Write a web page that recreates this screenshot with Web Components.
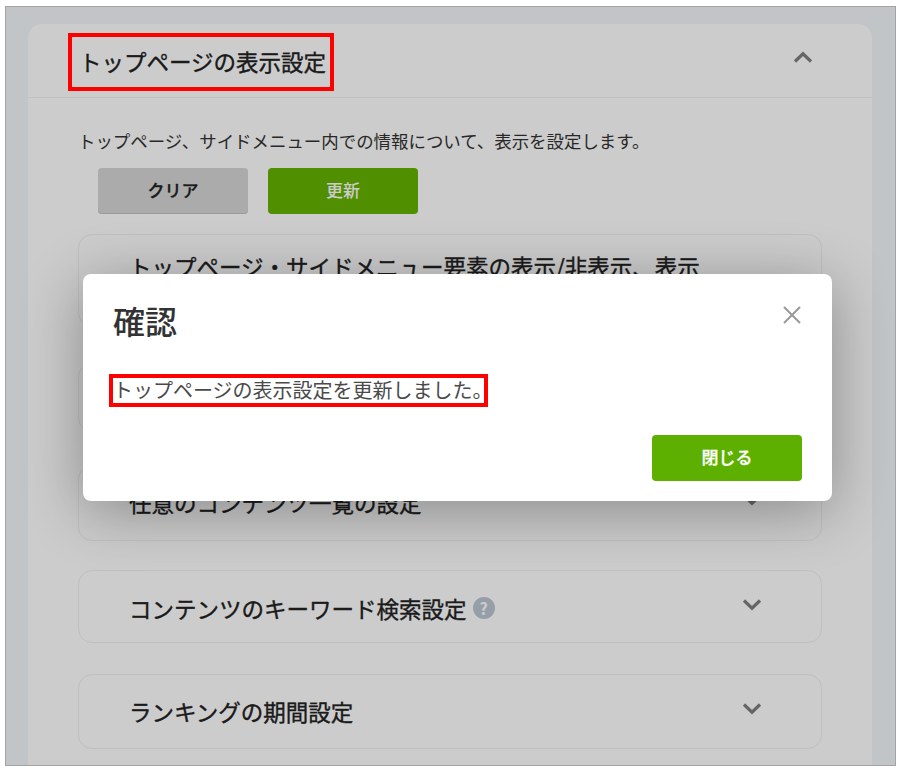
<!DOCTYPE html>
<html lang="ja">
<head>
<meta charset="utf-8">
<title>トップページの表示設定</title>
<style>
html, body { margin: 0; padding: 0; background: #fff; }
body { font-family: "Noto Sans CJK JP", "Noto Sans", sans-serif; color: #222; overflow: hidden; }
</style>
</head>
<body>
<shot-frame>
  <settings-card heading="トップページの表示設定">
    <span slot="desc">トップページ、サイドメニュー内での情報について、表示を設定します。</span>
    <app-button kind="gray">クリア</app-button>
    <app-button kind="green">更新</app-button>
    <set-panel slot="panels" h="93" gap="0" pad="16" chev="36">トップページ・サイドメニュー要素の表示/非表示、表示</set-panel>
    <set-panel slot="panels" h="69" gap="36"></set-panel>
    <set-panel slot="panels" h="76" gap="33" pad="21" chev="7">任意のコンテンツ一覧の設定</set-panel>
    <set-panel slot="panels" h="73" gap="29" help>コンテンツのキーワード検索設定</set-panel>
    <set-panel slot="panels" h="75" gap="31" pad="21" chev="7">ランキングの期間設定</set-panel>
  </settings-card>
  <red-mark slot="overlay"></red-mark>
  <confirm-dialog slot="overlay" heading="確認">
    トップページの表示設定を更新しました。
    <app-button slot="actions" kind="bright">閉じる</app-button>
  </confirm-dialog>
</shot-frame>

<script>
// screenshot frame + dimmed overlay
class ShotFrame extends HTMLElement{
    constructor(){
        super();
        this.attachShadow({mode:"open"}).innerHTML = `
<style>
:host{
    display: block;
    position: relative;
    box-sizing: border-box;
    width: 891px;
    height: 760px;
    margin: 6px 0 0 5px;
    border: 1px solid #a3a3a3;
    background: #f2f7fb;
    padding: 17px 23px 0 22px;
    overflow: hidden;
}
.overlay{
    position: absolute;
    inset: 0;
    background: rgba(0,0,0,0.2);
    padding: 267px 0 0 77px;
}
</style>
<slot></slot>
<div class="overlay"><slot name="overlay"></slot></div>`;
    }
}
customElements.define('shot-frame', ShotFrame);

// red annotation box drawn over the dimmed page
class RedMark extends HTMLElement{
    constructor(){
        super();
        this.attachShadow({mode:"open"}).innerHTML = `
<style>
:host{
    display: block;
    position: absolute;
    box-sizing: border-box;
    left: 62px;
    top: 26px;
    width: 266px;
    height: 58px;
    border: 4px solid #ff0000;
}
</style>`;
    }
}
customElements.define('red-mark', RedMark);

class SettingsCard extends HTMLElement{
    constructor(){
        super();
        this.attachShadow({mode:"open"}).innerHTML = `
<style>
:host{
    display: block;
    width: 844px;
    height: 900px;
    background: #fff;
    border-radius: 14px 14px 0 0;
}
.head{
    box-sizing: border-box;
    height: 74px;
    padding: 9px 59px 0 51px;
    border-bottom: 1px solid #f0f0f0;
    display: flex;
    justify-content: space-between;
}
h2{
    margin: 0;
    font-size: 22.5px;
    font-weight: 400;
    line-height: 56px;
    color: #222;
    -webkit-text-stroke: 0.35px #222;
}
svg{ margin: 18px 0 0 0; }
.desc{
    margin: 32px 0 0 50px;
    font-size: 17.45px;
    line-height: 22px;
    color: #333;
}
.btns{
    display: flex;
    gap: 20px;
    margin: 16px 0 0 70px;
}
.panels{
    margin: 20px 50px 0 50px;
}
</style>
<div class="head">
    <h2></h2>
    <svg width="20" height="12" viewBox="0 0 20 12"><path d="M2 10.5 L10 2.8 L18 10.5" fill="none" stroke="#808080" stroke-width="3.2"/></svg>
</div>
<div class="desc"><slot name="desc"></slot></div>
<div class="btns"><slot></slot></div>
<div class="panels"><slot name="panels"></slot></div>`;
        this.shadowRoot.querySelector("h2").textContent = this.getAttribute("heading");
    }
}
customElements.define('settings-card', SettingsCard);

class AppButton extends HTMLElement{
    constructor(){
        super();
        this.attachShadow({mode:"open"}).innerHTML = `
<style>
:host{
    display: flex;
    box-sizing: border-box;
    width: 150px;
    height: 46px;
    padding-bottom: 4px;
    align-items: center;
    justify-content: center;
    border-radius: 4px;
    font-size: 17px;
    font-weight: 500;
}
:host([kind="gray"]){ background: #d6d6d6; color: #222; box-shadow: inset 0 -1px 0 #c4c4c4; -webkit-text-stroke: 0.3px #222; }
:host([kind="green"]){ background: #63b300; color: #fff; }
:host([kind="bright"]){ background: #5eb000; color: #fff; -webkit-text-stroke: 0.3px #fff; }
</style>
<slot></slot>`;
    }
}
customElements.define('app-button', AppButton);

class SetPanel extends HTMLElement{
    constructor(){
        super();
        this.attachShadow({mode:"open"}).innerHTML = `
<style>
:host{
    display: block;
    box-sizing: border-box;
    border: 1px solid #f0f0f0;
    border-radius: 14px;
}
.row{
    display: flex;
    justify-content: space-between;
    align-items: flex-start;
    padding: 22px 59px 0 50px;
}
.txt{
    width: 572px;
    font-size: 22.5px;
    font-weight: 400;
    line-height: 30px;
    color: #222;
    -webkit-text-stroke: 0.35px #222;
}
.q{
    display: inline-block;
    vertical-align: 3px;
    width: 22px;
    height: 22px;
    margin-left: 6px;
    border-radius: 50%;
    background: #bcc6d3;
    color: #fff;
    font-size: 16px;
    font-weight: 700;
    line-height: 22px;
    text-align: center;
    -webkit-text-stroke: 0;
}
svg{ margin-top: 6px; flex: none; }
</style>
<div class="row">
    <div class="txt"><slot></slot></div>
    <svg width="20" height="12" viewBox="0 0 20 12"><path d="M2 1.5 L10 9.2 L18 1.5" fill="none" stroke="#808080" stroke-width="3.2"/></svg>
</div>`;
        this.style.height = this.getAttribute("h") + "px";
        this.style.marginTop = this.getAttribute("gap") + "px";
        const row = this.shadowRoot.querySelector(".row");
        if(this.hasAttribute("pad")){
            row.style.paddingTop = this.getAttribute("pad") + "px";
        }
        if(this.hasAttribute("chev")){
            this.shadowRoot.querySelector("svg").style.marginTop = this.getAttribute("chev") + "px";
        }
        if(this.hasAttribute("help")){
            const q = document.createElement("span");
            q.className = "q";
            q.textContent = "?";
            this.shadowRoot.querySelector(".txt").appendChild(q);
        }
    }
}
customElements.define('set-panel', SetPanel);

class ConfirmDialog extends HTMLElement{
    constructor(){
        super();
        this.attachShadow({mode:"open"}).innerHTML = `
<style>
:host{
    display: block;
    box-sizing: border-box;
    width: 749px;
    height: 227px;
    background: #fff;
    border-radius: 8px;
    box-shadow: 0 10px 60px rgba(0,0,0,0.32);
}
.top{
    display: flex;
    justify-content: space-between;
    padding: 25px 30px 0 30px;
}
h3{
    margin: 0;
    font-size: 32px;
    font-weight: 500;
    line-height: 42px;
    color: #333;
}
svg{ margin-top: 6px; }
.msg{
    box-sizing: border-box;
    display: inline-block;
    width: 379px;
    height: 33px;
    margin: 33px 0 0 26px;
    border: 4px solid #ff0000;
    font-size: 20px;
    line-height: 24px;
    color: #4a4a4a;
    white-space: nowrap;
}
.actions{
    display: flex;
    justify-content: flex-end;
    padding: 28px 30px 0 0;
}
</style>
<div class="top">
    <h3></h3>
    <svg width="20" height="20" viewBox="0 0 20 20"><path d="M2 2 L18 18 M18 2 L2 18" fill="none" stroke="#999" stroke-width="2"/></svg>
</div>
<div class="msg"><slot></slot></div>
<div class="actions"><slot name="actions"></slot></div>`;
        this.shadowRoot.querySelector("h3").textContent = this.getAttribute("heading");
    }
}
customElements.define('confirm-dialog', ConfirmDialog);
</script>
</body>
</html>
